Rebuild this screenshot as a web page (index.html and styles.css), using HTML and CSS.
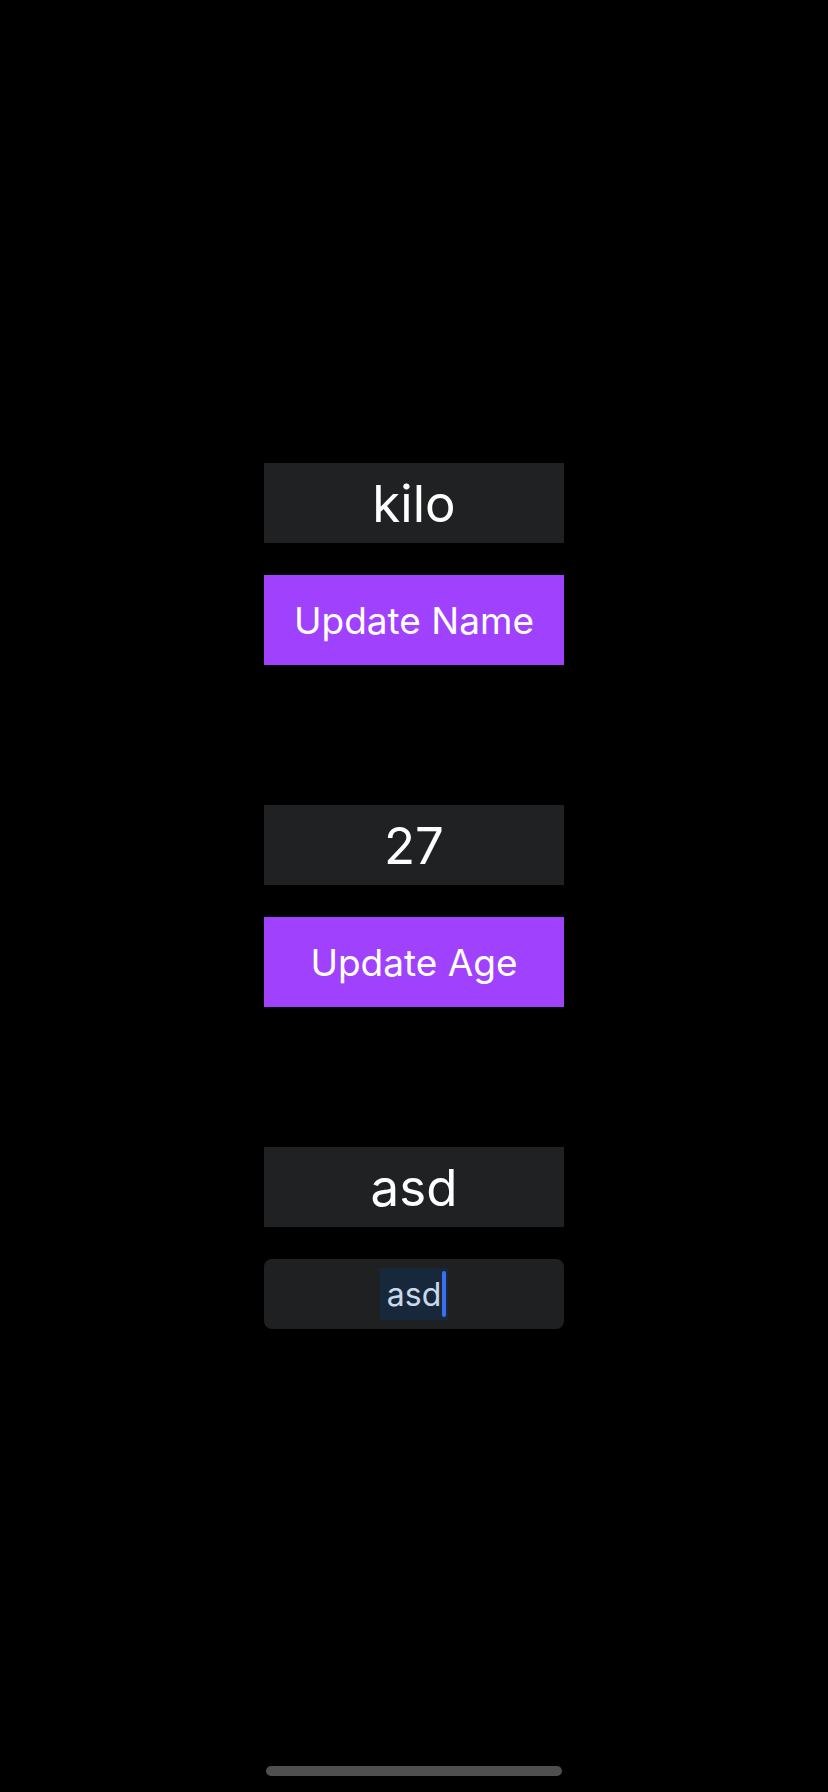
FILE: index.html
```html
<!DOCTYPE html>
<html lang="en">
	<head>
		<meta charset="UTF-8" />
		<meta name="viewport" content="width=device-width, initial-scale=1.0" />
		<title>State Demo</title>
		<link rel="stylesheet" href="styles.css">
	</head>

	<body>
		<div class="content-container">
			<div class="group">
				<div class="value">kilo</div>
				<button class="action">Update Name</button>
			</div>
			<div class="group">
				<div class="value">27</div>
				<button class="action">Update Age</button>
			</div>
			<div class="group">
				<div class="value">asd</div>
				<div class="field">
					<span class="selected">asd<span class="caret"></span></span>
				</div>
			</div>
		</div>
		<div class="home-indicator"></div>
	</body>
</html>
```

FILE: styles.css
```css
html, body {
	margin: 0;
	padding: 0;
	font-family: Inter, 'Noto Sans', sans-serif;
}

body {
	background-color: #000;
	width: 828px;
	height: 1792px;
	position: relative;
}

.content-container {
	display: flex;
	flex-direction: column;
	align-items: center;
	justify-content: center;
	gap: 140px;
	height: 100%;
}

.group {
	display: flex;
	flex-direction: column;
	gap: 32px;
	width: 300px;
}

.value {
	height: 80px;
	background-color: #202123;
	color: #fff;
	font-size: 51px;
	display: flex;
	align-items: center;
	justify-content: center;
}

.action {
	height: 90px;
	border: none;
	margin: 0;
	padding: 0;
	background-color: #a041fe;
	color: #fff;
	font-family: inherit;
	font-size: 37px;
}

.field {
	height: 70px;
	border-radius: 8px;
	background-color: #1f2022;
	display: flex;
	align-items: center;
	justify-content: center;
}

.selected {
	display: flex;
	align-items: center;
	height: 52px;
	padding: 0 2px 0 7px;
	background-color: #17283b;
	color: #c9d9eb;
	font-size: 32px;
}

.caret {
	display: block;
	width: 4px;
	height: 46px;
	margin-left: 1px;
	border-radius: 2px;
	background-color: #3b6ff2;
}

.home-indicator {
	position: absolute;
	left: 266px;
	top: 1766px;
	width: 296px;
	height: 10px;
	border-radius: 5px;
	background-color: #4f4f4f;
}
```
